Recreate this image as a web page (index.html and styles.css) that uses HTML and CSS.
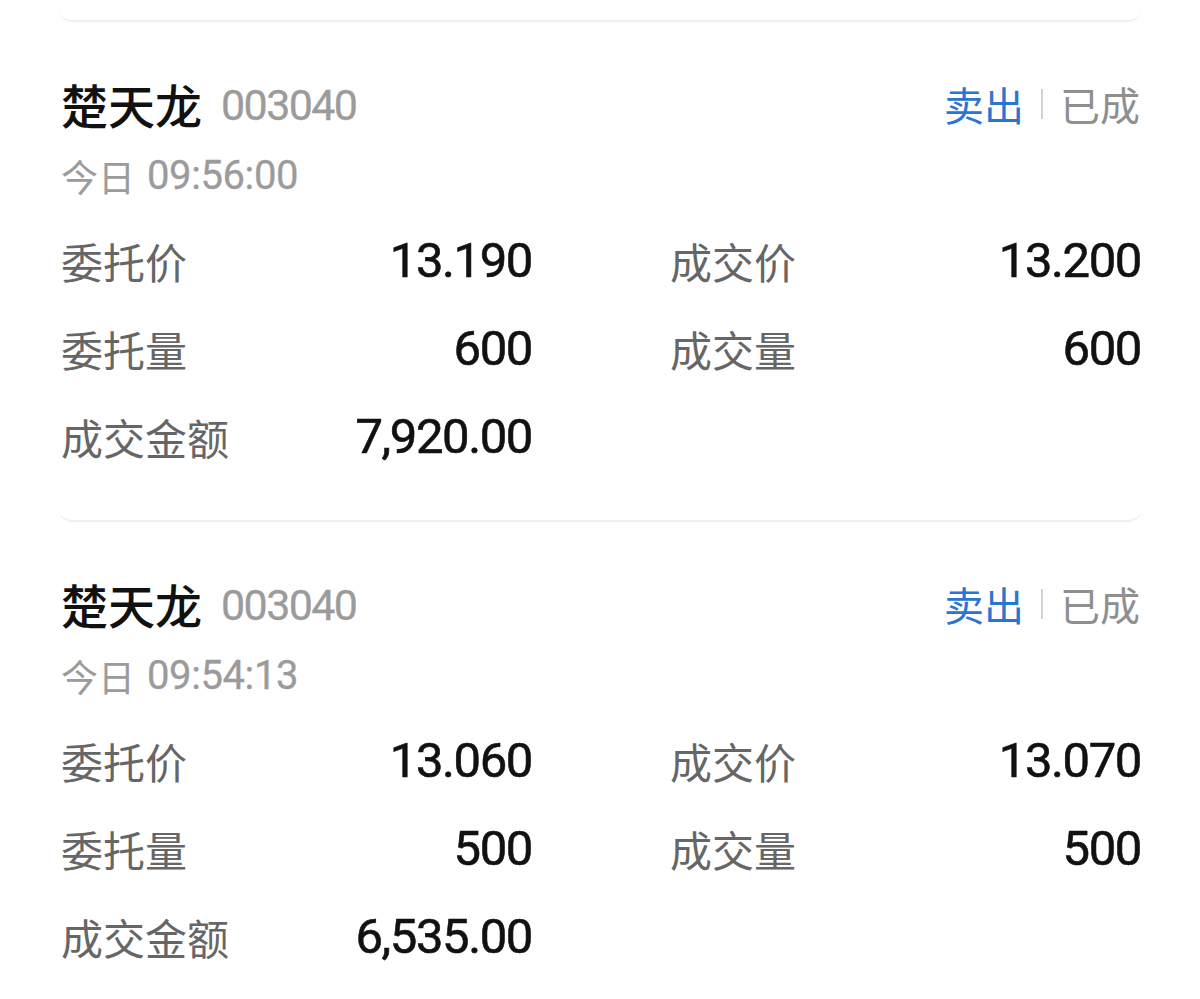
FILE: index.html
```html
<!DOCTYPE html>
<html lang="zh-CN">
<head>
<meta charset="utf-8">
<title>委托记录</title>
<link rel="stylesheet" href="styles.css">
</head>
<body>
<div class="list">
  <div class="card card-stub"></div>

  <div class="card">
    <div class="head">
      <div class="stock">
        <span class="name">楚天龙</span>
        <span class="code">003040</span>
      </div>
      <div class="status">
        <span class="side">卖出</span>
        <span class="sep"></span>
        <span class="state">已成</span>
      </div>
    </div>
    <div class="time"><span class="day">今日</span> <span class="clock">09:56:00</span></div>
    <div class="grid">
      <div class="pair"><span class="label">委托价</span><span class="value">13.190</span></div>
      <div class="pair"><span class="label">成交价</span><span class="value">13.200</span></div>
      <div class="pair"><span class="label">委托量</span><span class="value">600</span></div>
      <div class="pair"><span class="label">成交量</span><span class="value">600</span></div>
      <div class="pair"><span class="label">成交金额</span><span class="value">7,920.00</span></div>
    </div>
  </div>

  <div class="card">
    <div class="head">
      <div class="stock">
        <span class="name">楚天龙</span>
        <span class="code">003040</span>
      </div>
      <div class="status">
        <span class="side">卖出</span>
        <span class="sep"></span>
        <span class="state">已成</span>
      </div>
    </div>
    <div class="time"><span class="day">今日</span> <span class="clock">09:54:13</span></div>
    <div class="grid">
      <div class="pair"><span class="label">委托价</span><span class="value">13.060</span></div>
      <div class="pair"><span class="label">成交价</span><span class="value">13.070</span></div>
      <div class="pair"><span class="label">委托量</span><span class="value">500</span></div>
      <div class="pair"><span class="label">成交量</span><span class="value">500</span></div>
      <div class="pair"><span class="label">成交金额</span><span class="value">6,535.00</span></div>
    </div>
  </div>
</div>
</body>
</html>
```

FILE: styles.css
```css
html, body {
  margin: 0;
  padding: 0;
  background: #ffffff;
}

body {
  font-family: Roboto, "Noto Sans CJK SC", sans-serif;
  color: #1a1a1a;
  overflow: hidden;
}

.list {
  display: flex;
  flex-direction: column;
  padding: 0 58px;
}

.card {
  background: #ffffff;
  border-bottom: 2px solid #efefef;
  border-radius: 0 0 14px 14px;
  padding: 52px 2px 53px 3px;
  display: flex;
  flex-direction: column;
}

.card-stub {
  height: 22px;
  padding: 0;
  box-sizing: border-box;
}

.head {
  display: flex;
  justify-content: space-between;
  align-items: center;
  height: 60px;
}

.stock {
  display: flex;
  align-items: center;
  gap: 19px;
}

.name {
  font-family: "Noto Sans CJK SC", sans-serif;
  font-size: 47px;
  font-weight: 500;
  color: #111111;
  line-height: 60px;
}

.code {
  font-size: 43px;
  letter-spacing: -1.6px;
  color: #9b9b9b;
  line-height: 60px;
  padding-top: 2px;
  -webkit-text-stroke: 0.3px currentColor;
}

.status {
  display: flex;
  align-items: center;
  gap: 17px;
  font-family: "Noto Sans CJK SC", sans-serif;
  font-size: 40px;
  line-height: 60px;
}

.side {
  color: #2a74d4;
}

.sep {
  width: 2px;
  height: 30px;
  background: #d4d4d4;
}

.state {
  color: #8f8f8f;
}

.time {
  margin-top: 17px;
  height: 50px;
  line-height: 50px;
  color: #9b9b9b;
  display: flex;
  align-items: center;
  gap: 12px;
}

.day {
  font-family: "Noto Sans CJK SC", sans-serif;
  font-size: 37px;
}

.clock {
  font-size: 40px;
  letter-spacing: -0.4px;
  -webkit-text-stroke: 0.3px currentColor;
}

.grid {
  margin-top: 30px;
  display: grid;
  grid-template-columns: 1fr 1fr;
  column-gap: 139px;
  row-gap: 28px;
}

.pair {
  display: flex;
  justify-content: space-between;
  align-items: center;
  height: 60px;
}

.label {
  font-family: "Noto Sans CJK SC", sans-serif;
  font-size: 42px;
  color: #666666;
  line-height: 60px;
}

.value {
  font-size: 49px;
  font-weight: 400;
  letter-spacing: -1.4px;
  color: #111111;
  line-height: 60px;
  margin-right: -1px;
  -webkit-text-stroke: 0.6px currentColor;
}
```
